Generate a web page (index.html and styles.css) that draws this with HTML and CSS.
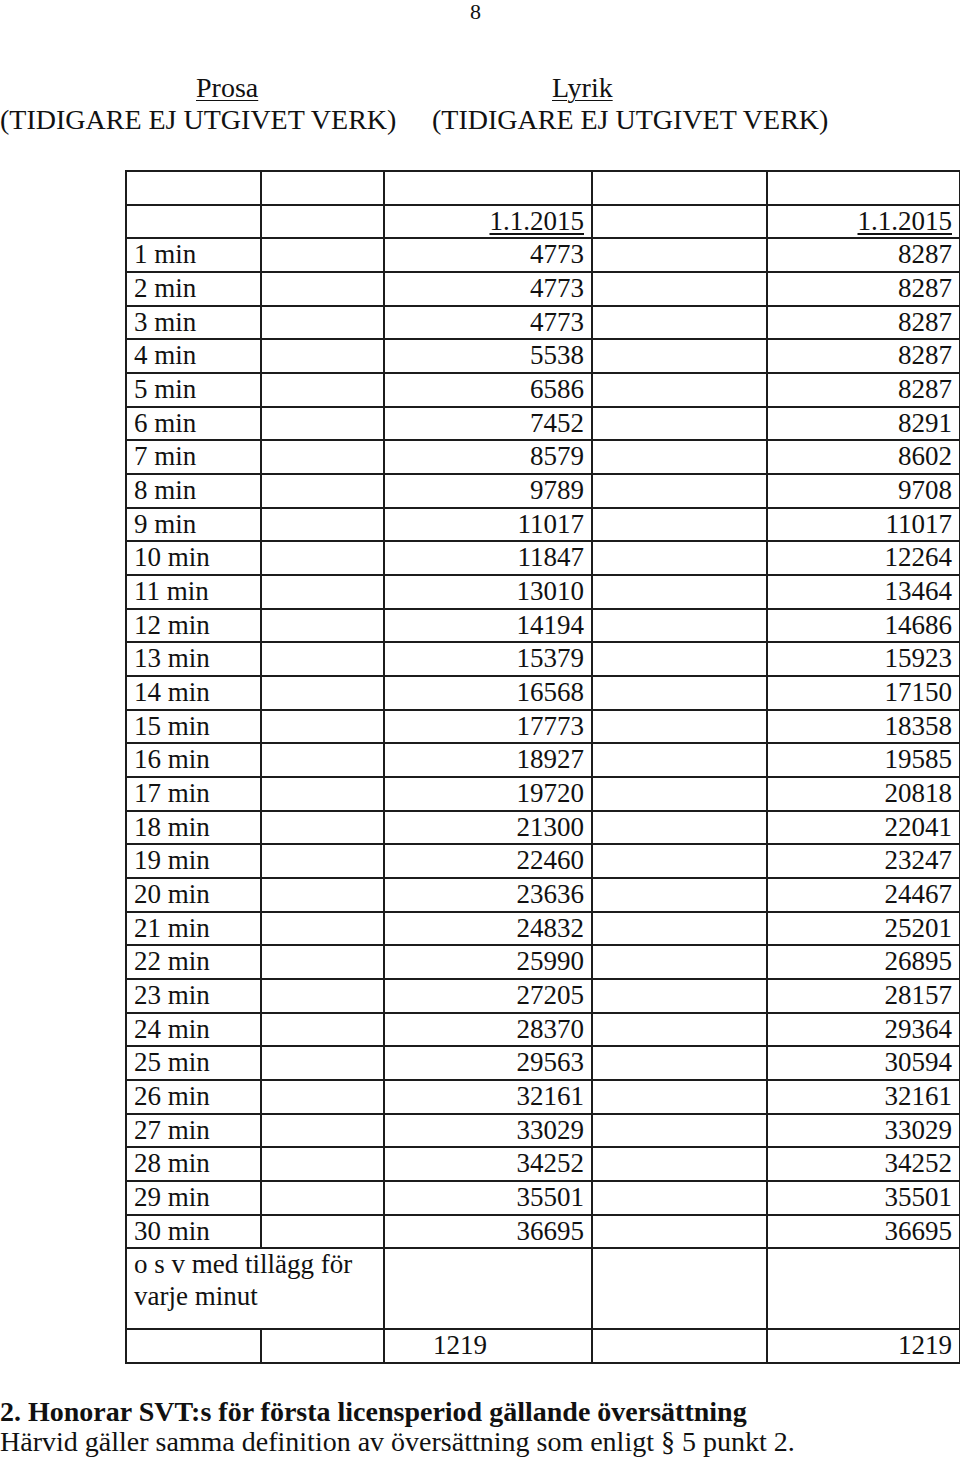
FILE: index.html
```html
<!DOCTYPE html>
<html lang="sv">
<head>
<meta charset="utf-8">
<title>Honorar</title>
<link rel="stylesheet" href="styles.css">
</head>
<body>
<div class="pagenum">8</div>
<div class="titles">
  <div class="tblock first">
    <div class="tname"><u>Prosa</u></div>
    <div>(TIDIGARE EJ UTGIVET VERK)</div>
  </div>
  <div class="tblock second">
    <div class="tname"><u>Lyrik</u></div>
    <div>(TIDIGARE EJ UTGIVET VERK)</div>
  </div>
</div>
<table class="fees">
  <colgroup>
    <col class="c1"><col class="c2"><col class="c3"><col class="c4"><col class="c5">
  </colgroup>
  <tr><td></td><td></td><td></td><td></td><td></td></tr>
  <tr><td></td><td></td><td class="num"><u>1.1.2015</u></td><td></td><td class="num"><u>1.1.2015</u></td></tr>
  <tr><td>1 min</td><td></td><td class="num">4773</td><td></td><td class="num">8287</td></tr>
  <tr><td>2 min</td><td></td><td class="num">4773</td><td></td><td class="num">8287</td></tr>
  <tr><td>3 min</td><td></td><td class="num">4773</td><td></td><td class="num">8287</td></tr>
  <tr><td>4 min</td><td></td><td class="num">5538</td><td></td><td class="num">8287</td></tr>
  <tr><td>5 min</td><td></td><td class="num">6586</td><td></td><td class="num">8287</td></tr>
  <tr><td>6 min</td><td></td><td class="num">7452</td><td></td><td class="num">8291</td></tr>
  <tr><td>7 min</td><td></td><td class="num">8579</td><td></td><td class="num">8602</td></tr>
  <tr><td>8 min</td><td></td><td class="num">9789</td><td></td><td class="num">9708</td></tr>
  <tr><td>9 min</td><td></td><td class="num">11017</td><td></td><td class="num">11017</td></tr>
  <tr><td>10 min</td><td></td><td class="num">11847</td><td></td><td class="num">12264</td></tr>
  <tr><td>11 min</td><td></td><td class="num">13010</td><td></td><td class="num">13464</td></tr>
  <tr><td>12 min</td><td></td><td class="num">14194</td><td></td><td class="num">14686</td></tr>
  <tr><td>13 min</td><td></td><td class="num">15379</td><td></td><td class="num">15923</td></tr>
  <tr><td>14 min</td><td></td><td class="num">16568</td><td></td><td class="num">17150</td></tr>
  <tr><td>15 min</td><td></td><td class="num">17773</td><td></td><td class="num">18358</td></tr>
  <tr><td>16 min</td><td></td><td class="num">18927</td><td></td><td class="num">19585</td></tr>
  <tr><td>17 min</td><td></td><td class="num">19720</td><td></td><td class="num">20818</td></tr>
  <tr><td>18 min</td><td></td><td class="num">21300</td><td></td><td class="num">22041</td></tr>
  <tr><td>19 min</td><td></td><td class="num">22460</td><td></td><td class="num">23247</td></tr>
  <tr><td>20 min</td><td></td><td class="num">23636</td><td></td><td class="num">24467</td></tr>
  <tr><td>21 min</td><td></td><td class="num">24832</td><td></td><td class="num">25201</td></tr>
  <tr><td>22 min</td><td></td><td class="num">25990</td><td></td><td class="num">26895</td></tr>
  <tr><td>23 min</td><td></td><td class="num">27205</td><td></td><td class="num">28157</td></tr>
  <tr><td>24 min</td><td></td><td class="num">28370</td><td></td><td class="num">29364</td></tr>
  <tr><td>25 min</td><td></td><td class="num">29563</td><td></td><td class="num">30594</td></tr>
  <tr><td>26 min</td><td></td><td class="num">32161</td><td></td><td class="num">32161</td></tr>
  <tr><td>27 min</td><td></td><td class="num">33029</td><td></td><td class="num">33029</td></tr>
  <tr><td>28 min</td><td></td><td class="num">34252</td><td></td><td class="num">34252</td></tr>
  <tr><td>29 min</td><td></td><td class="num">35501</td><td></td><td class="num">35501</td></tr>
  <tr><td>30 min</td><td></td><td class="num">36695</td><td></td><td class="num">36695</td></tr>
  <tr class="osv"><td colspan="2">o s v med tillägg för<br>varje minut</td><td></td><td></td><td></td></tr>
  <tr><td></td><td></td><td class="indent">1219</td><td></td><td class="num">1219</td></tr>
</table>
<div class="footer">
  <div class="heading">2. Honorar SVT:s för första licensperiod gällande översättning</div>
  <div>Härvid gäller samma definition av översättning som enligt § 5 punkt 2.</div>
</div>
</body>
</html>
```

FILE: styles.css
```css
html, body {
  margin: 0;
  padding: 0;
  background: #ffffff;
}

body {
  font-family: "Liberation Serif", "Times New Roman", serif;
  font-size: 27px;
  color: #111111;
  width: 960px;
  overflow: hidden;
}

.pagenum {
  font-size: 22px;
  line-height: 24px;
  padding-left: 470px;
}

.titles {
  display: flex;
  margin-top: 48px;
  font-size: 28px;
  line-height: 32px;
  white-space: nowrap;
}

.tblock.first {
  width: 432px;
}

.tblock.first .tname {
  padding-left: 196px;
}

.tblock.second .tname {
  padding-left: 120px;
}

.tname u {
  text-decoration-thickness: 1px;
  text-underline-offset: 3px;
}

.fees {
  border-collapse: collapse;
  margin-top: 34px;
  margin-left: 125px;
  table-layout: fixed;
  width: 834px;
}

.c1 { width: 135px; }
.c2 { width: 123px; }
.c3 { width: 208px; }
.c4 { width: 175px; }
.c5 { width: 193px; }

.fees td {
  border: 2px solid #1c1c1c;
  padding: 0 7px;
  height: 31.67px;
  line-height: 31.67px;
  vertical-align: top;
  white-space: nowrap;
  overflow: hidden;
}

.fees td.num {
  text-align: right;
}

.fees td.indent {
  padding-left: 48px;
}

.fees td u {
  text-decoration-thickness: 2px;
  text-underline-offset: 3px;
}

.fees tr.osv td {
  height: 79px;
}

.footer {
  margin-top: 33px;
  font-size: 28px;
  line-height: 30px;
  white-space: nowrap;
}

.footer .heading {
  font-weight: bold;
}
```
